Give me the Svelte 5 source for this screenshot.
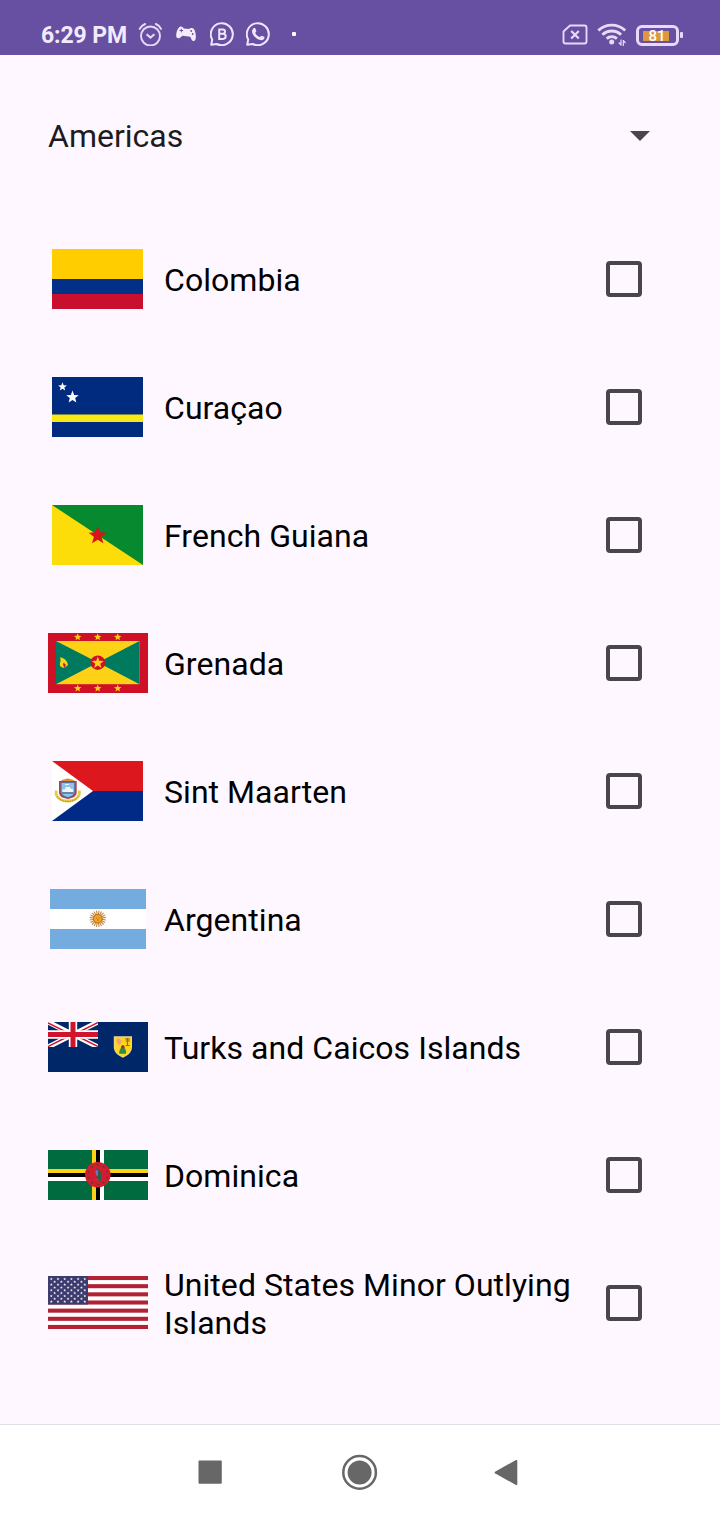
<script>
  let countries = $state([
    { name: 'Colombia', flag: 'co', w: 91, h: 60, checked: false },
    { name: 'Curaçao', flag: 'cw', w: 91, h: 60, checked: false },
    { name: 'French Guiana', flag: 'gf', w: 91, h: 60, checked: false },
    { name: 'Grenada', flag: 'gd', w: 100, h: 60, checked: false },
    { name: 'Sint Maarten', flag: 'sx', w: 91, h: 60, checked: false },
    { name: 'Argentina', flag: 'ar', w: 96, h: 60, checked: false },
    { name: 'Turks and Caicos Islands', flag: 'tc', w: 100, h: 50, checked: false },
    { name: 'Dominica', flag: 'dm', w: 100, h: 50, checked: false },
    { name: 'United States Minor Outlying Islands', flag: 'um', w: 100, h: 53, checked: false }
  ]);

  function star(cx, cy, r) {
    return Array.from({ length: 10 }, (_, i) => {
      const a = (Math.PI / 5) * i - Math.PI / 2;
      const d = i % 2 ? r * 0.42 : r;
      return `${(cx + d * Math.cos(a)).toFixed(2)},${(cy + d * Math.sin(a)).toFixed(2)}`;
    }).join(' ');
  }

  const ring = (n, cx, cy, r) =>
    Array.from({ length: n }, (_, i) => {
      const a = ((i + 0.5) / n) * 2 * Math.PI;
      return [cx + r * Math.cos(a), cy + r * Math.sin(a)];
    });

  const unionStars = Array.from({ length: 9 }, (_, row) =>
    Array.from({ length: row % 2 ? 5 : 6 }, (_, col) => [3.3 + col * 6.7 + (row % 2 ? 3.35 : 0), 3 + row * 2.83])
  ).flat();
</script>

{#snippet flagArt(code)}
  {#if code === 'co'}
    <rect width="91" height="60" fill="#ffcd00" />
    <rect y="30" width="91" height="15" fill="#003087" />
    <rect y="45" width="91" height="15" fill="#c8102e" />
  {:else if code === 'cw'}
    <rect width="91" height="60" fill="#002b7f" />
    <rect y="37.5" width="91" height="7.5" fill="#f9e814" />
    <polygon points={star(10.5, 9.9, 4.6)} fill="#fff" />
    <polygon points={star(20.5, 20.2, 6.6)} fill="#fff" />
  {:else if code === 'gf'}
    <rect width="91" height="60" fill="#078930" />
    <path d="M0 0 91 60H0z" fill="#fcdd09" />
    <polygon points={star(45.7, 30.6, 9.6)} fill="#da121a" />
  {:else if code === 'gd'}
    <rect width="100" height="60" fill="#ce1126" />
    <rect x="8" y="8" width="83.5" height="43.2" fill="#fcd116" />
    <path d="M8 8 50 29.6 8 51.2zM91.5 8 50 29.6 91.5 51.2z" fill="#007a5e" />
    <circle cx="49.8" cy="29.7" r="7.3" fill="#ce1126" />
    <polygon points={star(49.8, 29.9, 6.2)} fill="#fcd116" />
    {#each [29.7, 49.7, 69.7] as x}
      <polygon points={star(x, 4.2, 3.9)} fill="#fcd116" />
      <polygon points={star(x, 55.4, 3.9)} fill="#fcd116" />
    {/each}
    <path d="M12 24.3C16 25 19 27.500 20 31.500C17.500 35.500 13.500 35.500 12 32.500C11.300 29.500 13.500 28.500 12 24.300z" fill="#fcd116" />
    <path d="M15.300 30C18 30.500 18.500 32.500 16.500 34.500C15.300 33 14.700 31.500 15.300 30z" fill="#b5222a" />
  {:else if code === 'sx'}
    <rect width="91" height="30" fill="#dc171d" />
    <rect y="30" width="91" height="30" fill="#012a87" />
    <path d="M0 0 41 30 0 60z" fill="#fff" />
    <path d="M4.300 29.500C3 35.500 7.500 40 15.700 40S28.500 35.500 27.200 29.500" fill="none" stroke="#e8cb45" stroke-width="2.800" />
    <path d="M5.500 35.500C8 39.500 12 40.500 15.700 40.500S23.500 39.500 26 35.500" fill="none" stroke="#8f7a2d" stroke-width=".8" stroke-dasharray="1 .8" />
    <path d="M8 20.500C10 18 13 19 15.700 17.300C18.500 19 21.500 18 23.500 20.500z" fill="#e68b2c" />
    <path d="M7 20H24.700V31C24.700 35 21.500 37 15.800 38C10 37 7 35 7 31z" fill="#b64144" />
    <path d="M9 21.500H22.700V30.500C22.700 33.500 20 35.500 15.800 36.500C11.700 35.500 9 33.500 9 30.500z" fill="#8fc3ea" stroke="#526fa0" />
    <path d="M10.500 31V28.500H12.500L14 26H18L19 28H21V31z" fill="#f1f5f8" />
    <path d="M10 32H21.700" stroke="#4c6e92" stroke-width="1.400" />
    <path d="M13 23.500h4" stroke="#e6f2fa" />
  {:else if code === 'ar'}
    <rect width="96" height="60" fill="#74acdf" />
    <rect y="20" width="96" height="20" fill="#fff" />
    {#each ring(20, 47.800, 29.700, 8.2) as [x, y]}
      <path d="M47.800 29.700L{x} {y}" stroke="#c58746" stroke-width="1.100" />
    {/each}
    <circle cx="47.800" cy="29.700" r="4.300" fill="#f2a51c" stroke="#a8641c" stroke-width=".8" />
    <path d="M46 29h1m1.500 0h1m-2.500 2h2" stroke="#a35c18" stroke-width=".7" />
  {:else if code === 'tc'}
    <rect width="100" height="50" fill="#002868" />
    <svg width="50" height="25" viewBox="0 0 50 25">
      <path d="M0 0 50 25M50 0 0 25" stroke="#fff" stroke-width="5" />
      <path d="M0 .8 24 12.800M26 12.500 50 24.500M50 .5 26 12.500M24 12.500 0 24.500" stroke="#cf142b" stroke-width="1.500" />
      <path d="M25 0V25M0 12.500H50" stroke="#fff" stroke-width="8.400" />
      <path d="M25 0V25M0 12.500H50" stroke="#cf142b" stroke-width="5" />
    </svg>
    <path d="M65.800 14.200H84V25C84 30 80 33.500 74.900 35.700C69.800 33.500 65.800 30 65.800 25z" fill="#e9d8a0" />
    <path d="M66.600 15H83.200V25C83.200 29.500 79.500 32.700 74.900 34.800C70.300 32.700 66.600 29.500 66.600 25z" fill="#ffd61c" />
    <path d="M68.300 17.500 71 16.300 73.300 18.500 73.500 21 71 23 69 21z" fill="#f0a07c" />
    <path d="M77 17h5M77.500 19h4.500M79.500 16v7M77.700 23.500h4" stroke="#9b681c" stroke-width="1.200" />
    <path d="M73 25C73 22.500 76.500 22.500 76.700 25V27H73z" fill="#b42b25" />
    <path d="M72.500 26.500H77C77.800 28 78.500 30 77.800 31.700H71.300C71 29.500 71.700 28 72.500 26.500z" fill="#239146" />
  {:else if code === 'dm'}
    <rect width="100" height="50" fill="#006b3f" />
    <path d="M46 0V50M0 21H100" stroke="#fcd116" stroke-width="4" />
    <path d="M54 0V50M0 29H100" stroke="#fff" stroke-width="4" />
    <path d="M50 0V50M0 25H100" stroke="#000" stroke-width="4" />
    <circle cx="49.800" cy="24.800" r="12.800" fill="#d41c30" />
    {#each ring(10, 49.800, 24.800, 9.800) as [x, y]}
      <polygon points={star(x, y, 1.700)} fill="#5d4228" />
    {/each}
    <path d="M48.500 18C51.500 19 53.500 22 53.500 27L52.500 32 49 28C47.500 24 47 20 48.500 18z" fill="#26614b" />
    <path d="M47.800 19.500C50.500 20 50.500 23 49.500 26.500C47.500 25 47 22 47.800 19.500z" fill="#8b68ae" />
    <path d="M47 29.500H50.500" stroke="#3b7743" stroke-width="1.500" />
  {:else}
    <rect width="100" height="53" fill="#fff" />
    {#each Array(7) as _, i}
      <rect y={(i * 2 * 53) / 13} width="100" height={53 / 13} fill="#b22234" />
    {/each}
    <rect width="40" height="28.500" fill="#3c3b6e" />
    {#each unionStars as [x, y]}
      <polygon points={star(x, y, 1.600)} fill="#e6e6ee" />
    {/each}
  {/if}
{/snippet}

<div class="screen">
  <header class="status">
    <span class="time">6:29 PM</span>
    <div class="left-icons">
      <svg width="24" height="24" viewBox="0 0 24 24" fill="none" stroke="#e7daf8">
        <circle cx="12.500" cy="14" r="9.500" stroke-width="1.900" />
        <path d="M1.800 6.800C2.800 4.800 4.700 3 7.100 2M23 6.800C22.200 4.800 20.300 3 17.900 2" stroke-width="2" stroke-linecap="round" />
        <path d="M8.600 12.200 12.500 15.500 16.400 12.200" stroke-width="2.100" />
      </svg>
      <svg width="20" height="24" viewBox="0 0 20 24">
        <path d="M3.500 5C5 4 6.800 5 7.800 6.500L13 7C14.500 5.500 17 5.700 18.300 7.500C19.700 10.500 20.200 14.500 19.600 17C18.800 19.700 16.500 19.500 15.500 17.500L14.300 14.800 6.500 13.800 4 15.700C2.500 16.800.3 16.200.2 14C0 10.800 1.500 6.500 3.500 5z" fill="#f3edfb" />
        <path d="M5.300 6.800v3.500M3.500 8.500h3.600" stroke="#6750a2" stroke-width="1" />
        <circle cx="15.200" cy="9" r=".9" fill="#6750a2" /><circle cx="16.700" cy="12" r=".9" fill="#6750a2" />
      </svg>
      <svg width="24" height="24" viewBox="0 0 24 24" fill="none" stroke="#eee5fa">
        <path d="M1.200 22.700 2.200 17.600A11 11 0 1 1 6.800 22z" stroke-width="2" stroke-linejoin="round" />
        <path d="M9.200 7.400H12.700C15.800 7.400 15.800 11.800 12.700 11.800H9.200zM9.200 11.800H13C16.600 11.800 16.600 16.900 13 16.900H9.200z" stroke-width="2" />
      </svg>
      <svg width="24" height="24" viewBox="0 0 24 24">
        <path d="M1.200 22.700 2.200 17.600A11 11 0 1 1 6.800 22z" fill="none" stroke="#eee5fa" stroke-width="2" stroke-linejoin="round" />
        <path d="M7.200 6.400C8.500 5.300 9.200 5.900 9.600 7L10.300 9C10.500 9.800 9.500 10.400 9.200 10.900C10.300 13 12 14.300 14 15.100C14.600 14.600 15.200 13.500 15.800 13.700L18.200 14.800C18.900 15.300 18.200 17 17.200 17.700C12.800 20 5.600 13.500 6 9C6.100 8 6.600 7 7.200 6.400z" fill="#eee5fa" />
      </svg>
      <i class="dot"></i>
    </div>
    <div class="right-icons">
      <svg width="26" height="24" viewBox="0 0 26 24" fill="none" stroke="#e7daf8">
        <path d="M8 2.500H22.500Q24.500 2.500 24.500 4.500V18.500Q24.500 20.500 22.500 20.500H3.500Q1.500 20.500 1.500 18.500V8.500z" stroke-width="1.900" stroke-linejoin="round" />
        <path d="M9.200 8 16.800 15.500M16.800 8 9.200 15.500" stroke-width="2.200" />
      </svg>
      <svg width="30" height="26" viewBox="0 0 30 26" fill="none" stroke="#e7daf8">
        <path d="M1.300 8.500C9 1.300 20.500 1.300 28.200 8.500M5.400 12.700C10.800 7.700 18.800 7.700 24.100 12.700M9.700 16.700C12.700 14 16.900 14 19.900 16.700" stroke-width="2.900" />
        <circle cx="14.700" cy="20" r="2.500" fill="#e7daf8" stroke="none" />
        <path d="M24 17.500V23.500M21.800 20.500 24 23M26.300 24V18M28.500 21 26.300 18.500" stroke-width="1.200" />
      </svg>
      <div class="battery"><span class="charge">81</span></div>
    </div>
  </header>

  <main>
    <div class="select">
      <span>Americas</span>
      <svg width="20" height="12" viewBox="0 0 20 12"><path d="M0 2H20L10 12z" fill="#49454f" /></svg>
    </div>
    <ul>
      {#each countries as c}
        <li>
          <label>
            <span class="flag">
              <svg width={c.w} height={c.h} viewBox="0 0 {c.w} {c.h}">{@render flagArt(c.flag)}</svg>
            </span>
            <span class="name">{c.name}</span>
            <input type="checkbox" bind:checked={c.checked} />
          </label>
        </li>
      {/each}
    </ul>
  </main>

  <nav>
    <svg width="24" height="24" viewBox="0 0 24 24"><rect x=".5" y=".5" width="23.300" height="23.300" rx="1" fill="#676767" /></svg>
    <svg width="36" height="36" viewBox="0 0 36 36"><circle cx="17.600" cy="18.400" r="16.300" fill="none" stroke="#676767" stroke-width="2.500" /><circle cx="17.600" cy="18.400" r="12" fill="#676767" /></svg>
    <svg width="24" height="28" viewBox="0 0 24 28"><path d="M1 13.700Q.2 14.500 1 15.300L22 27Q23.300 27.500 23.300 26V3Q23.300 1.500 22 2z" fill="#676767" /></svg>
  </nav>
</div>

<style>
  :global(body) { margin: 0; }
  .screen {
    width: 720px;
    height: 1520px;
    display: flex;
    flex-direction: column;
    background: #fef7ff;
    font-family: Roboto, sans-serif;
    overflow: hidden;
  }
  svg { display: block; flex: none; }
  .status {
    height: 55px;
    box-sizing: border-box;
    padding: 14px 38px 0 41px;
    display: flex;
    align-items: center;
    background: #6750a2;
    color: #f3ebfc;
  }
  .time {
    width: 97px;
    padding-top: 2px;
    font-size: 23px;
    font-weight: 700;
    line-height: 27px;
    letter-spacing: -0.1px;
    white-space: nowrap;
  }
  .left-icons { display: flex; align-items: center; gap: 12px; margin-top: -1px; }
  .left-icons svg:nth-child(2) { margin: 0 2px; }
  .dot { width: 4px; height: 4px; margin-left: 10px; border-radius: 1px; background: #fff; }
  .right-icons { margin-left: auto; padding-top: 1px; display: flex; align-items: center; gap: 9px; }
  .battery {
    position: relative;
    box-sizing: border-box;
    width: 43px;
    height: 21px;
    margin-right: 3px;
    padding: 3px 3.5px;
    border: 3px solid #e7daf8;
    border-radius: 6px;
    display: flex;
  }
  .battery::after {
    content: '';
    position: absolute;
    right: -7px;
    top: 4.5px;
    width: 3px;
    height: 6px;
    border-radius: 1px;
    background: #e7daf8;
  }
  .charge {
    width: 26px;
    height: 10px;
    background: #dc983c;
    color: #fff;
    font-size: 15px;
    font-weight: 500;
    line-height: 10px;
    text-indent: 6px;
  }
  main { flex: 1; }
  .select {
    height: 160px;
    padding: 0 70px 0 48px;
    display: flex;
    align-items: center;
    justify-content: space-between;
    color: #1d1b20;
    font-size: 32px;
  }
  .select span { padding-top: 2px; }
  ul { margin: 0; padding: 0; list-style: none; }
  label {
    height: 128px;
    box-sizing: border-box;
    padding: 0 78px 0 48px;
    display: flex;
    align-items: center;
  }
  .flag { width: 100px; height: 60px; display: flex; justify-content: center; align-items: center; }
  .flag svg[width='91'] { margin-right: 1px; }
  .flag svg[height='53'] { margin-bottom: 1px; }
  .name {
    flex: 1;
    padding: 2px 20px 0 16px;
    color: #000;
    font-size: 32px;
    line-height: 38px;
    letter-spacing: 0.05px;
  }
  input {
    appearance: none;
    flex: none;
    width: 36px;
    height: 36px;
    box-sizing: border-box;
    margin: 0;
    border: 4px solid #49454f;
    border-radius: 4px;
  }
  input:checked { background: #6750a4; border-color: #6750a4; }
  nav {
    height: 96px;
    box-sizing: border-box;
    border-top: 1px solid #e3dde6;
    padding: 0 202px 1px 198px;
    background: #fff;
    display: flex;
    align-items: center;
    justify-content: space-between;
  }
  nav svg:nth-child(2) { margin-left: 3px; }
</style>
